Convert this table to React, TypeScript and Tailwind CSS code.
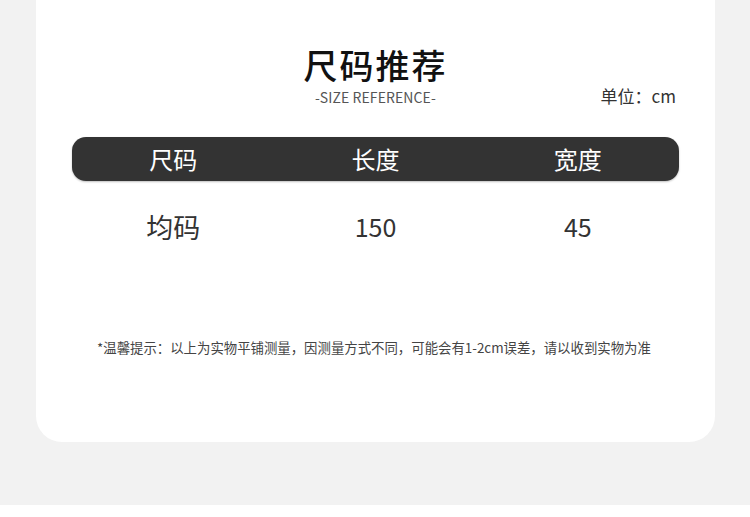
const font = "font-['Noto_Sans_CJK_SC','Noto_Sans',sans-serif]";

const columns = ["尺码", "长度", "宽度"];
const rows = [["均码", "150", "45"]];

export default function App() {
  return (
    <div className={`w-[750px] h-[517px] bg-[#f2f2f2] flex flex-col ${font}`}>
      <div className="mx-[36px] w-[679px] h-[442px] bg-white rounded-b-[26px] px-[36px] pt-[48px]">
        <h1 className="text-center text-[34px] leading-none font-medium tracking-[2px] text-[#111]">
          尺码推荐
        </h1>

        <div className="mt-[5px] h-[20px] grid grid-cols-[1fr_auto_1fr] items-center">
          <span />
          <span className="text-[14px] text-[#555] tracking-[0.1px]">-SIZE REFERENCE-</span>
          <span className="justify-self-end -mt-[4px] pr-[3px] text-[17px] text-[#333]">单位：cm</span>
        </div>

        <div className="mt-[30px] h-[44px] bg-[#333] rounded-[14px] grid grid-cols-3 items-center shadow-[0_1px_2px_rgba(0,0,0,0.25)]">
          {columns.map((c) => (
            <div key={c} className="text-center text-white text-[24px] leading-none">
              {c}
            </div>
          ))}
        </div>

        {rows.map((r) => (
          <div key={r[0]} className="mt-[23px] h-[44px] grid grid-cols-3 items-center">
            {r.map((v, i) => (
              <div
                key={i}
                className={`text-center text-[#333] leading-none ${i === 0 ? "text-[27px]" : "text-[25px]"}`}
              >
                {v}
              </div>
            ))}
          </div>
        ))}

        <p className="mt-[89px] h-[20px] pl-[25px] text-[13.4px] leading-[20px] text-[#444] whitespace-nowrap">
          *温馨提示：以上为实物平铺测量，因测量方式不同，可能会有1-2cm误差，请以收到实物为准
        </p>
      </div>
      <div className="mt-auto h-[12px] bg-white" />
    </div>
  );
}
